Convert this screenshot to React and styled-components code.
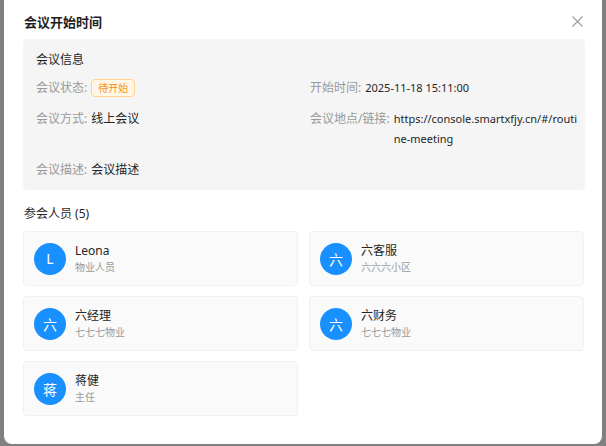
import styled, { createGlobalStyle } from "styled-components";

const GlobalStyle = createGlobalStyle`
  html, body {
    margin: 0;
    padding: 0;
    background: #808080;
    font-family: "Noto Sans", "Noto Sans CJK SC", sans-serif;
  }
  * { box-sizing: border-box; }
`;

const info = {
  status: "待开始",
  startTime: "2025-11-18 15:11:00",
  mode: "线上会议",
  place: "https://console.smartxfjy.cn/#/routine-meeting",
  desc: "会议描述",
};

const people = [
  { avatar: "L", name: "Leona", role: "物业人员" },
  { avatar: "六", name: "六客服", role: "六六六小区" },
  { avatar: "六", name: "六经理", role: "七七七物业" },
  { avatar: "六", name: "六财务", role: "七七七物业" },
  { avatar: "蒋", name: "蒋健", role: "主任" },
];

const App = () => {
  return (
    <>
      <GlobalStyle />
      <Overlay>
        <Modal>
          <Header>
            <Title>会议开始时间</Title>
            <CloseButton aria-label="关闭">
              <svg width="11" height="11" viewBox="0 0 11 11">
                <path d="M0.5 0.5 L10.5 10.5 M10.5 0.5 L0.5 10.5" stroke="#9a9a9a" strokeWidth="1.1" fill="none" />
              </svg>
            </CloseButton>
          </Header>

          <InfoBox>
            <InfoTitle>会议信息</InfoTitle>
            <InfoGrid>
              <Item>
                <Label>会议状态:</Label>
                <Tag>{info.status}</Tag>
              </Item>
              <Item>
                <Label>开始时间:</Label>
                <Value $latin>{info.startTime}</Value>
              </Item>
              <Item>
                <Label>会议方式:</Label>
                <Value>{info.mode}</Value>
              </Item>
              <Item>
                <Label>会议地点/链接:</Label>
                <Value $latin $wrap>{info.place}</Value>
              </Item>
              <Item>
                <Label>会议描述:</Label>
                <Value>{info.desc}</Value>
              </Item>
            </InfoGrid>
          </InfoBox>

          <SectionTitle>参会人员 ({people.length})</SectionTitle>
          <PeopleGrid>
            {people.map((p, i) => (
              <Card key={i}>
                <Avatar>{p.avatar}</Avatar>
                <PersonText>
                  <Name>{p.name}</Name>
                  <Role>{p.role}</Role>
                </PersonText>
              </Card>
            ))}
          </PeopleGrid>
        </Modal>
      </Overlay>
    </>
  );
};

export default App;

const Overlay = styled.div`
  width: 606px;
  height: 446px;
  padding: 0 4px;
  overflow: hidden;
`;

const Modal = styled.div`
  width: 598px;
  height: 444px;
  background: #fff;
  border-radius: 0 0 8px 8px;
  padding: 0 17px 0 19px;
`;

const Header = styled.div`
  display: flex;
  align-items: center;
  justify-content: space-between;
  height: 39px;
  padding: 4px 0 0 1px;
`;

const Title = styled.div`
  font-size: 13px;
  font-weight: 700;
  color: #1f1f1f;
  line-height: 18px;
`;

const CloseButton = styled.div`
  display: flex;
  width: 16px;
  height: 16px;
  align-items: center;
  justify-content: center;
`;

const InfoBox = styled.div`
  background: #f5f5f5;
  border-radius: 4px;
  padding: 13px 8px 11px 13px;
  height: 151px;
`;

const InfoTitle = styled.div`
  font-size: 12px;
  line-height: 16px;
  color: #1f1f1f;
  margin-bottom: 10px;
`;

const InfoGrid = styled.div`
  display: grid;
  grid-template-columns: 262px 1fr;
  column-gap: 12px;
  row-gap: 11px;
`;

const Item = styled.div`
  display: flex;
  align-items: flex-start;
  font-size: 12px;
  line-height: 20px;
`;

const Label = styled.span`
  color: #999;
  margin-right: 4px;
  white-space: nowrap;
`;

const Value = styled.span`
  color: #262626;
  font-size: ${(p) => (p.$latin ? "11px" : "12px")};
  word-break: ${(p) => (p.$wrap ? "break-all" : "normal")};
`;

const Tag = styled.span`
  display: inline-flex;
  align-items: center;
  height: 18px;
  margin-top: 1px;
  padding: 0 6px;
  font-size: 10px;
  line-height: 16px;
  color: #fa8c16;
  background: #fff7e6;
  border: 1px solid #ffd591;
  border-radius: 4px;
`;

const SectionTitle = styled.div`
  margin-top: 15px;
  padding-left: 1px;
  font-size: 12px;
  line-height: 17px;
  color: #262626;
`;

const PeopleGrid = styled.div`
  margin-top: 9px;
  display: grid;
  grid-template-columns: 275px 275px;
  column-gap: 11px;
  row-gap: 10px;
`;

const Card = styled.div`
  display: flex;
  align-items: center;
  height: 55px;
  padding: 0 10px;
  gap: 9px;
  background: #fafafa;
  border: 1px solid #f0f0f0;
  border-radius: 4px;
`;

const Avatar = styled.div`
  flex: none;
  width: 32px;
  height: 32px;
  border-radius: 50%;
  background: #1890ff;
  color: #fff;
  display: flex;
  align-items: center;
  justify-content: center;
  font-size: 14px;
`;

const PersonText = styled.div`
  display: flex;
  flex-direction: column;
`;

const Name = styled.div`
  font-size: 12px;
  line-height: 17px;
  color: #262626;
`;

const Role = styled.div`
  font-size: 10px;
  line-height: 17px;
  color: #999;
`;
